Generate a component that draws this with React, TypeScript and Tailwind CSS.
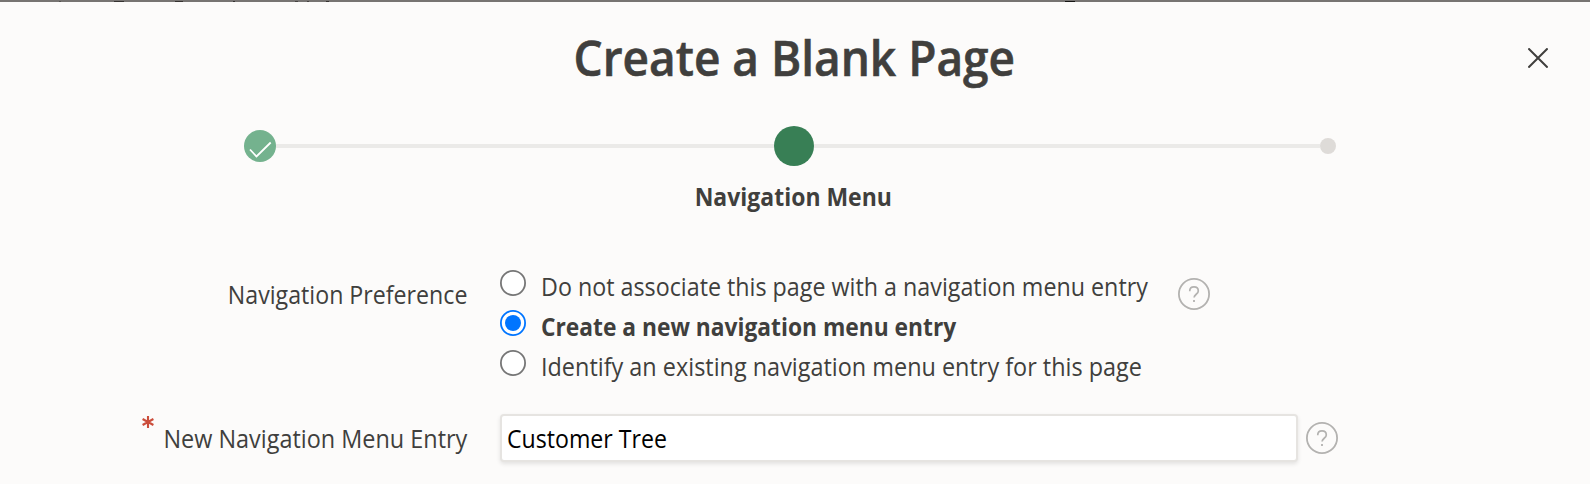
import React, { useState } from "react";

function HelpIcon() {
  return (
    <svg className="block h-8 w-8 text-[#b3b2b0]" viewBox="0 0 32 32" fill="none" stroke="currentColor">
      <circle cx="16" cy="16" r="15.1" strokeWidth="1.8" />
      <path d="M11.7 13.2C11.7 10.4 13.6 8.9 16 8.9s4.3 1.5 4.3 4c0 3.3-4.2 3.4-4.2 6.7" strokeWidth="1.7" />
      <path d="M15.1 23h1.8" strokeWidth="1.8" />
    </svg>
  );
}

const options = [
  { label: "Do not associate this page with a navigation menu entry", fit: "scale-x-[0.931]" },
  { label: "Create a new navigation menu entry", fit: "scale-x-[0.911]" },
  { label: "Identify an existing navigation menu entry for this page", fit: "scale-x-[0.937]" },
];

const remnants = [
  "ml-[59px] w-[2px] bg-[#55524f]",
  "ml-[53px] w-[10px] bg-[#353230]",
  "ml-[51px] w-[8px] bg-[#353230]",
  "ml-[50px] w-[2px] bg-[#353230]",
  "ml-[60px] w-[3px] bg-[#454240]",
  "ml-[9px] w-[2px] bg-[#454240]",
  "ml-[17px] w-[3px] bg-[#353230]",
  "ml-[736px] w-[10px] bg-[#161513]",
];

export default function App() {
  const [selected, setSelected] = useState(1);
  return (
    <div className="flex h-[484px] w-[1590px] flex-col overflow-hidden bg-[#fcfbfa] font-['Open_Sans',sans-serif] text-[25px] text-[#403f3d]">
      <div className="flex h-[2px] shrink-0 items-end bg-[#777472]">
        {remnants.map((c) => (
          <i key={c} className={`h-px shrink-0 ${c}`} />
        ))}
      </div>
      <header className="grid h-[110px] shrink-0 grid-cols-[1fr_auto_1fr] items-start">
        <h1 className="col-start-2 mt-[21px] mr-[2px] scale-x-[0.938] whitespace-nowrap text-[49px] leading-[68px] font-semibold [-webkit-text-stroke:0.6px_#403f3d]">
          Create a Blank Page
        </h1>
        <button aria-label="Close" className="mt-[46px] mr-[42px] justify-self-end">
          <svg className="block h-5 w-5" viewBox="0 0 20 20" fill="none" stroke="currentColor" strokeWidth="2">
            <path d="M.4.4l19.2 19.2M19.6.4L.4 19.6" />
          </svg>
        </button>
      </header>
      <div className="ml-[244px] flex h-[68px] w-[1092px] shrink-0 items-center">
        <svg className="block h-8 w-8 shrink-0" viewBox="0 0 32 32" fill="none">
          <circle cx="16" cy="16" r="16" fill="#74b28e" />
          <path d="M6 19.5l6.5 7L26.7 12.5" stroke="#fff" strokeWidth="1.8" />
        </svg>
        <div className="h-1 flex-1 bg-[#ebeae8]" />
        <div className="h-10 w-10 shrink-0 rounded-full bg-[#387f55]" />
        <div className="h-1 w-[506px] bg-[#ebeae8]" />
        <div className="h-4 w-4 shrink-0 rounded-full bg-[#dedbd8]" />
      </div>
      <div className="flex h-[90px] shrink-0 justify-center pr-[4px]">
        <span className="-mt-[2px] h-9 scale-x-[0.919] leading-9 font-bold">Navigation Menu</span>
      </div>
      <div className="flex h-[145px] shrink-0 items-start">
        <div className="mt-[6px] flex w-[467px] justify-end">
          <span className="origin-right scale-x-[0.927] whitespace-nowrap leading-9">Navigation Preference</span>
        </div>
        <div className="ml-[33px] w-[678px]">
          {options.map((o, i) => (
            <label key={o.label} className="flex h-10 items-start whitespace-nowrap">
              <input type="radio" name="preference" className="sr-only" checked={selected === i} onChange={() => setSelected(i)} />
              <svg className="block h-[26px] w-[26px] shrink-0" viewBox="0 0 26 26">
                <circle cx="13" cy="13" r="12.1" fill="#fff" strokeWidth="1.8" stroke={selected === i ? "#0075ff" : "#767676"} />
                {selected === i && <circle cx="13" cy="13" r="8" fill="#0075ff" />}
              </svg>
              <span className={`-mt-[2px] ml-[15px] origin-left leading-9 ${o.fit} ${selected === i ? "font-bold" : ""}`}>{o.label}</span>
            </label>
          ))}
        </div>
        <div className="mt-2"><HelpIcon /></div>
      </div>
      <div className="flex h-[69px] shrink-0 items-start">
        <svg className="mt-px ml-[142px] block h-3 w-3 shrink-0" viewBox="0 0 12 12" stroke="#cb4d3b" strokeWidth="2.1">
          <path d="M6 0v12M.6 3l10.8 6M11.4 3L.6 9" />
        </svg>
        <div className="mt-[5px] flex w-[313px] justify-end">
          <span className="origin-right scale-x-[0.937] whitespace-nowrap leading-9">New Navigation Menu Entry</span>
        </div>
        <div className="-mt-px ml-[33px] flex h-[48px] w-[798px] items-center rounded-[4px] border-2 border-[#e6e4e1] bg-white pl-[5px] shadow-[0_2px_4px_rgba(0,0,0,0.1)]">
          <input
            aria-label="New Navigation Menu Entry"
            defaultValue="Customer Tree"
            className="h-9 w-[780px] origin-left scale-x-[0.925] bg-transparent leading-9 text-black outline-none"
          />
        </div>
        <div className="mt-[7px] ml-[7.5px]"><HelpIcon /></div>
      </div>
    </div>
  );
}
